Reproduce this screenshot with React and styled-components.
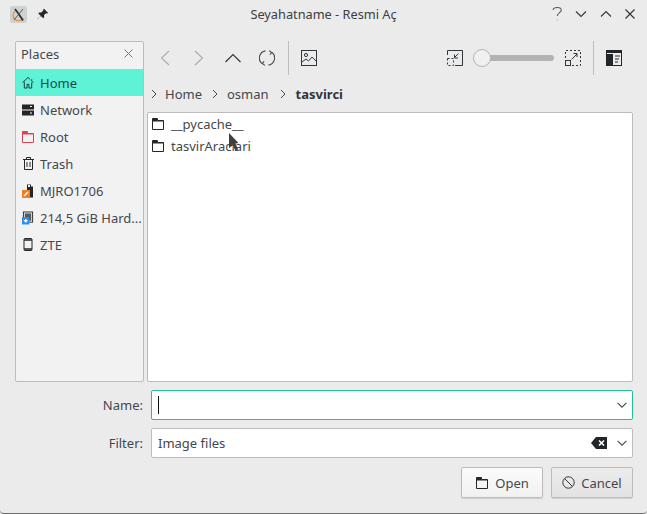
import React from "react";
import styled, { createGlobalStyle } from "styled-components";

const Global = createGlobalStyle`
  html, body { margin: 0; padding: 0; background: #ebebeb; }
  body { font-family: "Noto Sans", sans-serif; font-size: 13px; color: #31363b; }
`;
const Dialog = styled.div`
  width: 647px; height: 514px; box-sizing: border-box; background: #ebebeb;
  border-bottom: 1px solid #6e6e6e; border-radius: 0 0 4px 4px; display: flex; flex-direction: column; overflow: hidden;
`;
const TitleBar = styled.div`
  height: 29px; display: flex; align-items: center; padding: 0 11px 0 10px; position: relative; flex: none;
`;
const AppIcon = styled.div`
  width: 17px; height: 17px; background: #cfd2d3; border-radius: 2px; display: flex; margin-right: 10px;
`;
const Pin = styled.svg`
  position: relative; top: -1px;
`;
const Title = styled.div`
  position: absolute; left: 0; right: 0; top: 6px; text-align: center; font-size: 12.75px; line-height: 17px; color: #3b4045;
`;
const WinButtons = styled.div`
  margin-left: auto; display: flex; gap: 11px; align-items: center; position: relative; top: -1px;
`;
const Main = styled.div`
  display: flex; flex-direction: column; padding: 12px 14px 0 15px; flex: 1; min-height: 0;
`;
const Split = styled.div`
  display: flex; gap: 3px; height: 341px; flex: none;
`;
const Places = styled.div`
  width: 129px; box-sizing: border-box; flex: none; background: #f2f2f2; border: 1px solid #bcbcbc; border-radius: 2px;
`;
const PlacesHead = styled.div`
  height: 27px; box-sizing: border-box; display: flex; align-items: center; justify-content: space-between;
  padding: 0 10px 4px 5px; font-size: 13px; color: #43484d;
`;
const PlaceRow = styled.div`
  height: 27px; display: flex; align-items: center; gap: 6px; padding-left: 6px;
  background: ${p => (p.$active ? "#5ef2d6" : "transparent")};
  color: ${p => (p.$active ? "#1d4a48" : "#43484d")};
  white-space: nowrap; font-size: 13px;
`;
const IconSlot = styled.span`
  width: 12px; height: 16px; flex: none; display: flex; align-items: center; justify-content: center;
`;
const Right = styled.div`
  flex: 1; display: flex; flex-direction: column; min-width: 0;
`;
const Toolbar = styled.div`
  height: 34px; display: flex; align-items: center; flex: none;
`;
const ToolIcon = styled.span`
  width: ${p => p.$w || 34}px; flex: none; display: flex; justify-content: center; align-items: center;
  margin: ${p => p.$m || "0"};
`;
const Spacer = styled.div`
  flex: 1;
`;
const Sep = styled.div`
  width: 1px; height: 34px; background: #bebebe; flex: none;
  margin: ${p => p.$m || "0 4px"};
`;
const Slider = styled.div`
  width: 80px; height: 16px; position: relative; flex: none;
  &::before { content: ""; position: absolute; left: 6px; right: 0; top: 5px; height: 6px; border-radius: 3px; background: #b3b3b3; }
`;
const Knob = styled.div`
  position: absolute; left: -1px; top: -1px; width: 18px; height: 18px; box-sizing: border-box; border-radius: 50%;
  background: #f0f0f0; border: 1px solid #b4b4b4;
`;
const Crumbs = styled.div`
  height: 20px; margin-top: 9px; display: flex; align-items: center; padding-left: 3px; flex: none; color: #43484d; font-size: 13px;
`;
const CrumbSep = styled.span`
  display: flex; margin: ${p => p.$m || "0 9px"};
`;
const Current = styled.span`
  font-weight: 700; color: #31363b;
`;
const FileList = styled.div`
  margin-top: 8px; flex: 1; background: #fff; border: 1px solid #bcbcbc; border-radius: 2px; padding: 0 0 0 4px; position: relative;
`;
const FileRow = styled.div`
  height: 22px; display: flex; align-items: center; gap: 7px; color: #43484d; font-size: 13px;
`;
const Cursor = styled.svg`
  position: absolute; left: 81px; top: 20px;
`;
const FormRow = styled.div`
  display: grid; grid-template-columns: 136px 1fr; align-items: center; height: 30px; margin-top: ${p => p.$mt || 8}px; flex: none;
`;
const Label = styled.label`
  justify-self: end; padding-right: 8px; color: #43484d; font-size: 13px;
`;
const Combo = styled.div`
  height: 30px; box-sizing: border-box; background: #fff; border-radius: 2px;
  border: 1px solid ${p => (p.$focus ? "#1fbfa0" : "#bcbcbc")};
  display: flex; align-items: center; padding: 0 5px 0 6px; color: #43484d; font-size: 13px;
`;
const Caret = styled.div`
  width: 1px; height: 18px; background: #111;
`;
const ComboTail = styled.div`
  margin-left: auto; display: flex; align-items: center; gap: 10px;
`;
const Buttons = styled.div`
  display: flex; justify-content: flex-end; gap: 8px; margin-top: 9px; flex: none;
`;
const Button = styled.button`
  width: 82px; height: 31px; box-sizing: border-box; font: inherit; font-size: 13px; color: #43484d;
  border: 1px solid #bcbcbc; border-radius: 2px;
  background: ${p => (p.$pressed ? "linear-gradient(#ececec,#e3e3e3)" : "linear-gradient(#fbfbfb,#f1f1f1)")};
  box-shadow: 0 1px 1px rgba(0,0,0,.12);
  display: flex; align-items: center; justify-content: center; gap: ${p => p.$gap || 6}px;
  padding: 0 0 0 ${p => p.$pl || 0}px;
`;

const S = { fill: "none", stroke: "#232629", strokeWidth: 1 };
const Ico = ({ w = 16, h = 16, vb, children, ...r }) => (
  <svg width={w} height={h} viewBox={vb || `0 0 ${w} ${h}`} {...S} {...r}>{children}</svg>
);
const Folder = ({ c = "#232629" }) => (
  <Ico w={12} h={12} stroke={c}>
    <path d="M.5 11.5V.5h5v2h6v9z" />
    <path d="M.5 3h11" />
    <rect x="1" y="1" width="4" height="2" fill={c} stroke="none" />
  </Ico>
);
const Chev = ({ c = "#43484d" }) => (
  <svg width="7" height="12" viewBox="0 0 7 12" fill="none" stroke={c} strokeWidth="1">
    <path d="M2 2l4 4-4 4" />
  </svg>
);
const Down = () => (
  <svg width="10" height="6" viewBox="0 0 10 6" fill="none" stroke="#43484d" strokeWidth="1.1"><path d="M.6.8 5 5.2 9.4.8" /></svg>
);

export default function App() {
  return (
    <Dialog>
      <Global />
      <TitleBar>
        <AppIcon>
          <svg width="17" height="17" viewBox="0 0 17 17" fill="none">
            <path d="M5.5 5C2.5 7 2 11 5 13.5c2.5 1.8 6 2 8-1" stroke="#e08a3c" strokeWidth="1.1" />
            <path d="M5 3c2.5 3 5 7 8 11.5" stroke="#2d2d2d" strokeWidth="1.8" />
            <path d="M13 3 4 14" stroke="#4a4a4a" strokeWidth=".9" />
          </svg>
        </AppIcon>
        <Pin width="12" height="12" viewBox="0 0 12 12" fill="#232629">
          <path d="M7 .8 11.2 5l-1 .6-1.2-.3-2 2 .2 2-1 1L3.6 7.7.9 11.1l-.4-.4L3.9 8 1.3 5.4l1-1 2 .2 2-2L6 1.7z" />
        </Pin>
        <Title>Seyahatname - Resmi Aç</Title>
        <WinButtons>
          <svg width="12" height="16" viewBox="0 0 12 16" fill="none" stroke="#555a5f" strokeWidth="1.1">
            <path d="M2 4C2.5 1 10 .5 10.3 4c.2 2.5-4 2.8-4 6" />
            <path d="M6.3 13v1.5" stroke="#bbb" />
          </svg>
          <svg width="14" height="10" viewBox="0 0 14 10" fill="none" stroke="#31363b" strokeWidth="1.1"><path d="M2 2.5 7 7.5l5-5" /></svg>
          <svg width="14" height="10" viewBox="0 0 14 10" fill="none" stroke="#31363b" strokeWidth="1.1"><path d="M2 7.5 7 2.5l5 5" /></svg>
          <svg width="12" height="12" viewBox="0 0 12 12" fill="none" stroke="#31363b" strokeWidth="1.2"><path d="M1.5 1.5l9 9M10.5 1.5l-9 9" /></svg>
        </WinButtons>
      </TitleBar>
      <Main>
        <Split>
          <Places>
            <PlacesHead>
              Places
              <svg width="9" height="9" viewBox="0 0 9 9" stroke="#777" fill="none"><path d="M.5.5l8 8M8.5.5l-8 8" /></svg>
            </PlacesHead>
            <PlaceRow $active>
              <IconSlot>
                <svg width="13" height="13" viewBox="0 0 13 13" fill="none" stroke="#16302e"><path d="M.6 6.6 6.5 1l2.4 2.2M10.5 3v2l2 1.8M2.5 5.5v7h3v-4h2v4h3v-6" /></svg>
              </IconSlot>
              Home
            </PlaceRow>
            <PlaceRow>
              <IconSlot>
                <svg width="12" height="12" viewBox="0 0 12 12"><rect width="12" height="5" y="0.5" fill="#232629" /><rect width="12" height="5" y="6.5" fill="#232629" /><path d="M8 2.5h2M8 9h2" stroke="#fff" /></svg>
              </IconSlot>
              Network
            </PlaceRow>
            <PlaceRow>
              <IconSlot><Folder c="#da4453" /></IconSlot>
              Root
            </PlaceRow>
            <PlaceRow>
              <IconSlot>
                <svg width="11" height="13" viewBox="0 0 11 13" fill="none" stroke="#232629"><path d="M0 2.5h11M3.5 2.5v-2h4v2M1.5 2.5v10h8v-10M4 5v5M7 5v5" /></svg>
              </IconSlot>
              Trash
            </PlaceRow>
            <PlaceRow>
              <IconSlot>
                <svg width="12" height="14" viewBox="0 0 12 14"><path d="M5 .5h4v2h2v11H5z" fill="#232629" /><path d="M6 1h2v2H6z" fill="#f2f2f2" /><rect x="0" y="6" width="8" height="8" fill="#ee7f22" /><path d="M2 12l4-4" stroke="#fff" strokeWidth="1.4" /></svg>
              </IconSlot>
              MJRO1706
            </PlaceRow>
            <PlaceRow>
              <IconSlot>
                <svg width="13" height="14" viewBox="0 0 13 14"><rect x="1.5" y=".5" width="10" height="11" fill="none" stroke="#232629" /><rect x="3" y="2" width="7" height="8" fill="#232629" opacity=".75" /><rect x="0" y="6" width="8" height="8" fill="#2f8fe8" /><path d="M2 10h4M4 8v4" stroke="#fff" strokeWidth="1.4" /></svg>
              </IconSlot>
              214,5 GiB Hard...
            </PlaceRow>
            <PlaceRow>
              <IconSlot>
                <svg width="10" height="13" viewBox="0 0 10 13" fill="none" stroke="#232629"><rect x="1" y=".5" width="8" height="12" rx="1" /><path d="M1 2h8M1 11h8" strokeWidth="1.4" /></svg>
              </IconSlot>
              ZTE
            </PlaceRow>
          </Places>
          <Right>
            <Toolbar>
              <ToolIcon $w={36}>
                <svg width="10" height="16" viewBox="0 0 10 16" fill="none" stroke="#a9abad" strokeWidth="1.1"><path d="M9 1 1.5 8 9 15" /></svg>
              </ToolIcon>
              <ToolIcon $w={32}>
                <svg width="10" height="16" viewBox="0 0 10 16" fill="none" stroke="#a9abad" strokeWidth="1.1"><path d="M1 1l7.5 7L1 15" /></svg>
              </ToolIcon>
              <ToolIcon $w={36}>
                <svg width="16" height="10" viewBox="0 0 16 10" fill="none" stroke="#31363b" strokeWidth="1.1"><path d="M.5 9 8 1.5 15.5 9" /></svg>
              </ToolIcon>
              <ToolIcon $w={32}>
                <svg width="16" height="16" viewBox="0 0 16 16" fill="none" stroke="#43484d" strokeWidth="1.1">
                  <path d="M6.5.9A7.3 7.3 0 0 0 3 13.7M9.5 15.1A7.3 7.3 0 0 0 13 2.3" />
                  <path d="M10 .6 12.6 2.3 11 4.8M6 15.4 3.4 13.7 5 11.2" />
                </svg>
              </ToolIcon>
              <Sep $m="0 4px 0 5px" />
              <ToolIcon $w={32}>
                <svg width="16" height="16" viewBox="0 0 16 16" fill="none" stroke="#31363b"><rect x=".5" y=".5" width="15" height="15" /><circle cx="5" cy="5" r="1.6" /><path d="M1 12l4-3 2.5 2 3.5-4 4 4" /></svg>
              </ToolIcon>
              <Spacer />
              <ToolIcon $w={16} $m="0 11px 0 0">
                <svg width="16" height="16" viewBox="0 0 16 16" fill="none" stroke="#31363b">
                  <path d="M.5 5V.5h15v15H8" />
                  <path d="M11.5 3.5 7 8M7.5 4.5V8H11" />
                  <path d="M.5 8.5h6v7h-6z" strokeDasharray="2 2" />
                </svg>
              </ToolIcon>
              <Slider><Knob /></Slider>
              <ToolIcon $w={16} $m="0 0 0 11px">
                <svg width="16" height="16" viewBox="0 0 16 16" fill="none" stroke="#31363b">
                  <path d="M.5 8V.5h15v15H7" strokeDasharray="2 2" />
                  <path d="M6.5 9.5 12 4M8.5 3.5H12V7" />
                  <rect x=".5" y="10.5" width="5" height="5" />
                </svg>
              </ToolIcon>
              <Sep $m="0 12px 0 12px" />
              <ToolIcon $w={16} $m="0 11px 0 0">
                <svg width="16" height="16" viewBox="0 0 16 16"><rect x="0" y="0" width="16" height="3" fill="#232629" /><rect x=".5" y=".5" width="15" height="15" fill="none" stroke="#232629" /><rect x="1" y="4" width="6" height="11" fill="#232629" /><path d="M9 6h5M9 9h4M9 12h3" stroke="#232629" /></svg>
              </ToolIcon>
            </Toolbar>
            <Crumbs>
              <CrumbSep $m="0 8px 0 0"><Chev /></CrumbSep>
              Home
              <CrumbSep><Chev /></CrumbSep>
              osman
              <CrumbSep $m="0 10px"><Chev /></CrumbSep>
              <Current>tasvirci</Current>
            </Crumbs>
            <FileList>
              <FileRow><Folder />__pycache__</FileRow>
              <FileRow><Folder />tasvirAraclari</FileRow>
              <Cursor width="10" height="19" viewBox="0 0 10 19">
                <path d="M0 0l9.5 10-3 .6 2.5 6-2.5 1.6-2.5-6L0 15z" fill="#3c4043" />
              </Cursor>
            </FileList>
          </Right>
        </Split>
        <FormRow>
          <Label>Name:</Label>
          <Combo $focus><Caret /><ComboTail><Down /></ComboTail></Combo>
        </FormRow>
        <FormRow>
          <Label>Filter:</Label>
          <Combo>
            Image files
            <ComboTail>
              <svg width="16" height="12" viewBox="0 0 16 12"><path d="M5 0h11v12H5L0 6z" fill="#232629" /><path d="M8 3.5l5 5M13 3.5l-5 5" stroke="#fff" strokeWidth="1.6" /></svg>
              <Down />
            </ComboTail>
          </Combo>
        </FormRow>
        <Buttons>
          <Button $gap={7} $pl={1}><Folder />Open</Button>
          <Button $pressed>
            <svg width="13" height="13" viewBox="0 0 13 13" fill="none" stroke="#31363b"><circle cx="6.5" cy="6.5" r="5.7" /><path d="M2.5 2.5l8 8" /></svg>
            Cancel
          </Button>
        </Buttons>
      </Main>
    </Dialog>
  );
}
